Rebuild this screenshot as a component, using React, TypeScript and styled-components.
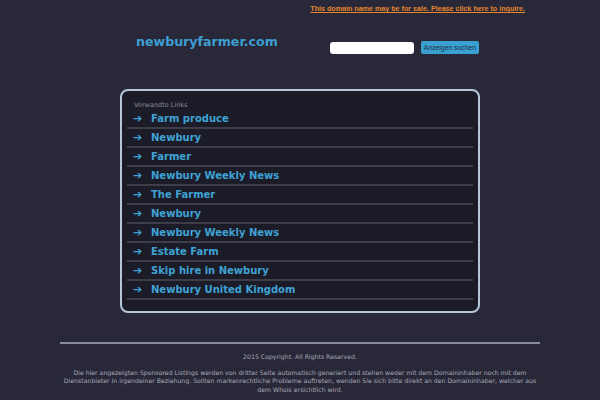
import React, { FC } from 'react';
import styled, { createGlobalStyle } from 'styled-components';

const GlobalStyle = createGlobalStyle`
  html, body {
    margin: 0;
    padding: 0;
    background: #282838;
    font-family: "DejaVu Sans", Verdana, sans-serif;
    overflow: hidden;
  }
`;

const Page = styled.div`
  width: 480px;
  margin: 0 auto;
  display: flex;
  flex-direction: column;
`;

const TopBar = styled.div`
  display: flex;
  justify-content: flex-end;
  padding: 5px 15px 0 0;
  height: 13px;
`;

const SaleLink = styled.a`
  font-family: "Liberation Sans", Arial, sans-serif;
  font-size: 7.15px;
  font-weight: bold;
  color: #e5862f;
  text-decoration: underline;
  cursor: pointer;
`;

const Header = styled.header`
  display: flex;
  align-items: center;
  justify-content: space-between;
  padding: 8px 61px 0 76px;
  height: 30px;
`;

const Title = styled.h1`
  margin: 0;
  font-size: 12.6px;
  font-weight: bold;
  color: #3d9fd2;
`;

const SearchForm = styled.form`
  display: flex;
  align-items: center;
  gap: 7px;
  margin-top: 13px;
`;

const SearchInput = styled.input`
  width: 84px;
  height: 12px;
  padding: 0;
  border: none;
  border-radius: 3px;
  background: #fff;
`;

const SearchButton = styled.button`
  height: 13px;
  padding: 0 3px;
  border: none;
  border-radius: 2px;
  background: #3aa0d2;
  color: #1e2d40;
  font-family: "Liberation Sans", Arial, sans-serif;
  font-size: 6.8px;
`;

const LinkBox = styled.div`
  align-self: center;
  width: 360px;
  margin-top: 33px;
  padding: 10px 5px 11px;
  box-sizing: border-box;
  border: 2px solid #b6c6d8;
  border-radius: 8px;
  background: #1c1c28;
`;

const BoxLabel = styled.div`
  font-size: 6.5px;
  color: #8a8a96;
  padding: 0 0 1px 7px;
`;

const LinkRow = styled.a`
  display: flex;
  align-items: center;
  height: 17px;
  border-bottom: 2px solid #3e3e4a;
  color: #3fa2d4;
  font-size: 10px;
  font-weight: bold;
  text-decoration: none;
  cursor: pointer;
`;

const Arrow = styled.span`
  width: 24px;
  padding-left: 6px;
  font-size: 11px;
  box-sizing: border-box;
`;

const Footer = styled.footer`
  margin-top: 29px;
  border-top: 2px solid #8a8aa0;
  padding-top: 9px;
  text-align: center;
  color: #a8a8b8;
  font-size: 6.2px;
  line-height: 8.5px;
`;

const FooterText = styled.p`
  margin: 0 -2px 7px;
`;

const links = [
  'Farm produce',
  'Newbury',
  'Farmer',
  'Newbury Weekly News',
  'The Farmer',
  'Newbury',
  'Newbury Weekly News',
  'Estate Farm',
  'Skip hire in Newbury',
  'Newbury United Kingdom',
];

const App: FC = () => {
  return (
    <>
      <GlobalStyle />
      <Page>
        <TopBar>
          <SaleLink>This domain name may be for sale. Please click here to inquire.</SaleLink>
        </TopBar>
        <Header>
          <Title>newburyfarmer.com</Title>
          <SearchForm onSubmit={(e) => e.preventDefault()}>
            <SearchInput type="text" />
            <SearchButton type="submit">Anzeigen suchen</SearchButton>
          </SearchForm>
        </Header>
        <LinkBox>
          <BoxLabel>Verwandte Links</BoxLabel>
          {links.map((link, i) => (
            <LinkRow key={i}>
              <Arrow>➔</Arrow>
              {link}
            </LinkRow>
          ))}
        </LinkBox>
        <Footer>
          <FooterText>2015 Copyright. All Rights Reserved.</FooterText>
          <FooterText>
            Die hier angezeigten Sponsored Listings werden von dritter Seite automatisch generiert und stehen weder mit
            dem Domaininhaber noch mit dem Dienstanbieter in irgendeiner Beziehung. Sollten markenrechtliche Probleme
            auftreten, wenden Sie sich bitte direkt an den Domaininhaber, welcher aus dem Whois ersichtlich wird.
          </FooterText>
          <FooterText>Privacy Policy</FooterText>
        </Footer>
      </Page>
    </>
  );
};

export default App;
